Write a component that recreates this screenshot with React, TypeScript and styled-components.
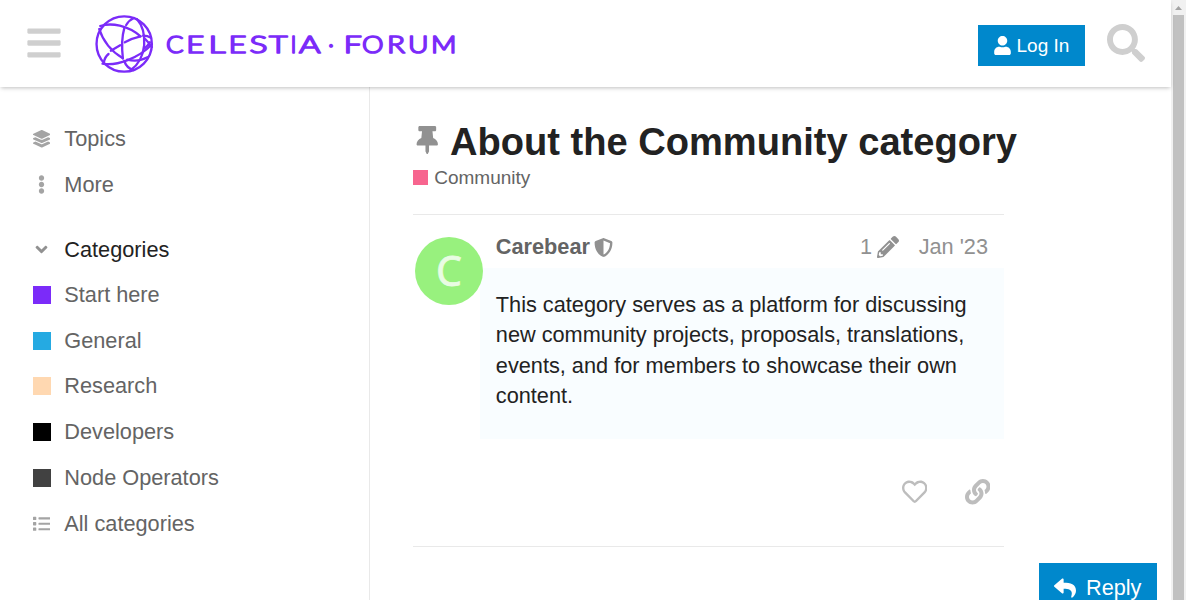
import React from "react";
import styled, { createGlobalStyle } from "styled-components";
import {
  FaAngleDown,
  FaBars,
  FaEllipsisV,
  FaLayerGroup,
  FaLink,
  FaList,
  FaPencilAlt,
  FaRegHeart,
  FaReply,
  FaSearch,
  FaShieldAlt,
  FaThumbtack,
  FaUser,
} from "react-icons/fa";

const GlobalStyle = createGlobalStyle`
  * { box-sizing: border-box; }
  body {
    margin: 0;
    overflow: hidden;
    background: #fff;
    color: #222;
    font-family: "Liberation Sans", Arial, sans-serif;
    font-size: 21.72px;
  }
  svg { display: block; flex: none; }
`;

const Screen = styled.div`
  display: flex;
  height: 600px;
  overflow: hidden;
`;

const Page = styled.div`
  display: flex;
  flex-direction: column;
  flex: 1;
  min-width: 0;
`;

const Header = styled.header`
  display: flex;
  align-items: center;
  flex: none;
  height: 87px;
  padding: 0 26px 1px 25px;
  color: #cfcfcf;
  background: #fff;
  box-shadow: 0 2px 4px -1px rgba(0, 0, 0, 0.25);
  z-index: 1;
`;

const Logo = styled.svg`
  margin: 1px 0 0 31px;
`;

const LogoText = styled.text`
  font-family: Lato, sans-serif;
  font-weight: 300;
  font-size: 22.8px;
  fill: #7b2bf9;
  stroke: #7b2bf9;
  stroke-width: 1.6;
  stroke-linejoin: round;
`;

const Button = styled.button<{ $large?: boolean }>`
  display: flex;
  align-items: center;
  flex: none;
  gap: ${(p) => (p.$large ? 10 : 4.5)}px;
  width: ${(p) => (p.$large ? 118 : 107)}px;
  height: ${(p) => (p.$large ? 50 : 41)}px;
  padding: 0 15px;
  border: 0;
  background: #0088cc;
  color: #fff;
  font-family: inherit;
  font-size: ${(p) => (p.$large ? 21.7 : 19)}px;
  white-space: nowrap;
`;

const LoginSlot = styled.div`
  margin: 5px 22px 0 auto;
`;

const Body = styled.div`
  display: flex;
  flex: 1;
  min-height: 0;
`;

const Sidebar = styled.nav`
  width: 370px;
  flex: none;
  padding-top: 29px;
  border-right: 1px solid #e9e9e9;
`;

const SidebarRow = styled.div<{ $heading?: boolean }>`
  display: flex;
  align-items: center;
  height: ${(p) => (p.$heading ? 44.65 : 45.75)}px;
  margin-top: ${(p) => (p.$heading ? 19.9 : 0)}px;
  padding-left: 32px;
  color: ${(p) => (p.$heading ? "#222" : "#646464")};
`;

const RowIcon = styled.span`
  display: flex;
  justify-content: center;
  width: 19px;
  margin-right: 13.3px;
  color: #a4a4a4;
`;

const Swatch = styled.span<{ $color: string; $size: number }>`
  width: ${(p) => p.$size}px;
  height: ${(p) => p.$size}px;
  background: ${(p) => p.$color};
`;

const Topic = styled.main`
  width: 591px;
  flex: none;
  margin-left: 43px;
  padding-top: 32px;
`;

const Title = styled.h1`
  display: flex;
  gap: 8.5px;
  margin: 0;
  height: 46px;
  font-size: 38.1px;
  line-height: 46px;
  white-space: nowrap;
  svg { margin-top: 6.5px; color: #919191; }
`;

const Category = styled.div`
  display: flex;
  align-items: center;
  gap: 6.2px;
  height: 25px;
  color: #646464;
  font-size: 19px;
`;

const Post = styled.article`
  display: flex;
  height: 333px;
  margin-top: 24px;
  border-top: 1px solid #e9e9e9;
  border-bottom: 1px solid #e9e9e9;
`;

const Avatar = styled.div`
  flex: none;
  width: 68px;
  height: 68px;
  margin: 22px -3px 0 2px;
  border-radius: 50%;
  background: #98f17e;
  color: #e9fce3;
  font-family: "Noto Sans", sans-serif;
  font-size: 41px;
  line-height: 66px;
  text-align: center;
  -webkit-text-stroke: 0.8px #e9fce3;
  z-index: 1;
`;

const PostContent = styled.div`
  flex: 1;
`;

const PostMeta = styled.div`
  display: flex;
  align-items: center;
  height: 53px;
  padding: 11px 16px 0 15.8px;
  color: #919191;
`;

const Author = styled.strong`
  margin-right: 4px;
  color: #646464;
`;

const Edits = styled.span`
  display: flex;
  align-items: center;
  gap: 4.6px;
  margin: 0 20px 0 auto;
`;

const Cooked = styled.p`
  height: 171px;
  margin: 0;
  padding: 22px 16px 21px 15.8px;
  background: #f9fdff;
  line-height: 30.4px;
  white-space: nowrap;
`;

const Actions = styled.div`
  display: flex;
  align-items: center;
  justify-content: flex-end;
  gap: 37.5px;
  height: 106px;
  padding-right: 13.8px;
  color: #bdbdbd;
`;

const ReplySlot = styled.aside`
  margin: 476px 0 0 35px;
`;

const Scrollbar = styled.div`
  display: flex;
  flex-direction: column;
  align-items: center;
  flex: none;
  width: 15px;
  background: #f1f1f1;
`;

const ScrollThumb = styled.div`
  width: 11px;
  flex: 1;
  background: #c1c1c1;
`;

/* letter, left edge, advance */
const wordmark: [string, number, number][] = [
  ["C", 72, 17.5],
  ["E", 92.3, 18],
  ["L", 114.5, 17],
  ["E", 134.5, 18],
  ["S", 155.5, 18],
  ["T", 175, 18.5],
  ["I", 196.5, 6],
  ["A", 205, 21.5],
  ["·", 234, 6],
  ["F", 249.8, 18],
  ["O", 268, 21.5],
  ["R", 293, 18],
  ["U", 314, 20.5],
  ["M", 337, 25.5],
];

const CelestiaLogo = () => (
  <Logo width="364" height="60" viewBox="0 0 364 60">
    <g
      transform="translate(-8.8 -9) scale(0.33333)"
      fill="none"
      stroke="#7b2bf9"
      strokeWidth="7"
      strokeLinecap="round"
    >
      <circle cx="117" cy="117" r="83" />
      <path d="M45 63C78 52 128 61 166 94" />
      <path d="M42 72Q60 128 113 160" />
      <path d="M52 176C95 184 162 158 198 120" />
      <path d="M56 172Q58 157 70 147" />
      <path d="M77 137L105 121M119 112Q142 99 166 94" />
      <path d="M117 71Q107 105 113 160" />
      <path d="M123 60Q132 45 146 39" />
      <path d="M155 42Q180 70 177 120Q172 170 137 195" />
      <path d="M174 92Q188 92 196 98M180 102Q190 112 200 126M178 130Q188 122 194 112" />
      <path d="M117 168Q125 190 145 195M126 164Q160 172 187 157" />
    </g>
    <LogoText y="38.6">
      {wordmark.map(([letter, x, advance], i) => (
        <tspan key={i} x={x} textLength={advance} lengthAdjust="spacingAndGlyphs">
          {letter}
        </tspan>
      ))}
    </LogoText>
  </Logo>
);

const categories = [
  ["Start here", "#7b2bf9"],
  ["General", "#25aae2"],
  ["Research", "#ffd8b1"],
  ["Developers", "#000000"],
  ["Node Operators", "#414141"],
];

export default function App() {
  return (
    <>
      <GlobalStyle />
      <Screen>
        <Page>
          <Header>
            <FaBars size={38} />
            <CelestiaLogo />
            <LoginSlot>
              <Button>
                <FaUser size={19} />
                Log In
              </Button>
            </LoginSlot>
            <FaSearch size={38} />
          </Header>
          <Body>
            <Sidebar>
              <SidebarRow>
                <RowIcon><FaLayerGroup size={17.5} /></RowIcon>
                Topics
              </SidebarRow>
              <SidebarRow>
                <RowIcon><FaEllipsisV size={19} /></RowIcon>
                More
              </SidebarRow>
              <SidebarRow $heading>
                <RowIcon><FaAngleDown size={19} color="#919191" /></RowIcon>
                Categories
              </SidebarRow>
              {categories.map(([name, color]) => (
                <SidebarRow key={name}>
                  <RowIcon><Swatch $color={color} $size={18} /></RowIcon>
                  {name}
                </SidebarRow>
              ))}
              <SidebarRow>
                <RowIcon><FaList size={17.5} /></RowIcon>
                All categories
              </SidebarRow>
            </Sidebar>
            <Topic>
              <Title>
                <FaThumbtack size={28.5} />
                About the Community category
              </Title>
              <Category>
                <Swatch $color="#f7658f" $size={15} />
                Community
              </Category>
              <Post>
                <Avatar>C</Avatar>
                <PostContent>
                  <PostMeta>
                    <Author>Carebear</Author>
                    <FaShieldAlt size={19} />
                    <Edits>
                      1
                      <FaPencilAlt size={22} />
                    </Edits>
                    Jan '23
                  </PostMeta>
                  <Cooked>
                    This category serves as a platform for discussing
                    <br />
                    new community projects, proposals, translations,
                    <br />
                    events, and for members to showcase their own
                    <br />
                    content.
                  </Cooked>
                  <Actions>
                    <FaRegHeart size={25.5} />
                    <FaLink size={25.5} />
                  </Actions>
                </PostContent>
              </Post>
            </Topic>
            <ReplySlot>
              <Button $large>
                <FaReply size={22} />
                Reply
              </Button>
            </ReplySlot>
          </Body>
        </Page>
        <Scrollbar>
          <svg width="15" height="15" viewBox="0 0 15 15">
            <path d="M4 10L7.5 6L11 10Z" fill="#a3a3a3" />
          </svg>
          <ScrollThumb />
        </Scrollbar>
      </Screen>
    </>
  );
}
